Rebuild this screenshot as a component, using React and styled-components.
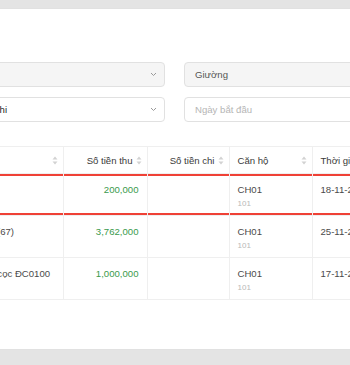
import React from 'react'
import styled, { createGlobalStyle } from 'styled-components'

const GlobalStyle = createGlobalStyle`
    html, body {
        margin: 0;
        padding: 0;
        background: #e4e4e4;
        font-family: "Liberation Sans", Arial, sans-serif;
    }
`

const rows = [
    { title: 'Tiền cọc', income: '200,000', code: 'CH01', room: '101', date: '18-11-2023', active: true },
    { title: 'Tiền phí (67)', income: '3,762,000', code: 'CH01', room: '101', date: '25-11-2023' },
    { title: 'Thu tiền cọc ĐC0100', income: '1,000,000', code: 'CH01', room: '101', date: '17-11-2023' },
]

const Chevron = () => (
    <svg width="7" height="5" viewBox="0 0 7 5">
        <path d="M1 1l2.5 2.5L6 1" fill="none" stroke="#9a9a9a" strokeWidth="1" />
    </svg>
)

const Sorter = () => (
    <svg width="6" height="9" viewBox="0 0 6 9">
        <path d="M3 0.5L5.5 3.5H0.5Z" fill="#d2d2d2" />
        <path d="M3 8.5L5.5 5.5H0.5Z" fill="#d2d2d2" />
    </svg>
)

export default function App() {
    return (
        <>
            <GlobalStyle />
            <Page>
                <Panel>
                    <Shift>
                        <Filters>
                            <Field disabled>
                                <span></span>
                                <Chevron />
                            </Field>
                            <Field disabled>
                                <span>Giường</span>
                            </Field>
                            <Field>
                                <Value>Loại thu chi</Value>
                                <Chevron />
                            </Field>
                            <Field>
                                <Placeholder>Ngày bắt đầu</Placeholder>
                            </Field>
                        </Filters>

                        <Table>
                            <colgroup>
                                <col style={{ width: 111 }} />
                                <col style={{ width: 84 }} />
                                <col style={{ width: 82 }} />
                                <col style={{ width: 83 }} />
                                <col style={{ width: 120 }} />
                            </colgroup>
                            <thead>
                                <tr>
                                    <Th><HeadCell>Nội dung<Sorter /></HeadCell></Th>
                                    <Th><HeadCell right>Số tiền thu<Sorter /></HeadCell></Th>
                                    <Th><HeadCell right>Số tiền chi<Sorter /></HeadCell></Th>
                                    <Th><HeadCell>Căn hộ<Sorter /></HeadCell></Th>
                                    <Th><HeadCell>Thời gian<Sorter /></HeadCell></Th>
                                </tr>
                            </thead>
                            <tbody>
                                {rows.map((r, i) => (
                                    <tr key={i}>
                                        <Td active={r.active}>{r.title}</Td>
                                        <Td active={r.active} right><Money>{r.income}</Money></Td>
                                        <Td active={r.active} right></Td>
                                        <Td active={r.active}>
                                            <div>{r.code}</div>
                                            <Sub>{r.room}</Sub>
                                        </Td>
                                        <Td active={r.active}>{r.date}</Td>
                                    </tr>
                                ))}
                            </tbody>
                        </Table>
                    </Shift>
                </Panel>
            </Page>
        </>
    )
}

const Page = styled.div`
    width: 350px;
    height: 365px;
    padding-top: 9px;
    box-sizing: border-box;
    overflow: hidden;
`

const Panel = styled.div`
    background: #ffffff;
    height: 340px;
    padding-top: 53px;
    box-sizing: border-box;
    box-shadow: 0 0 1px rgba(0, 0, 0, 0.08);
`

const Shift = styled.div`
    margin-left: -54px;
    width: 700px;
`

const Filters = styled.div`
    display: grid;
    grid-template-columns: 219px 300px;
    column-gap: 19px;
    row-gap: 10px;
`

const Field = styled.div`
    height: 25px;
    box-sizing: border-box;
    border: 1px solid #e1e1e1;
    border-radius: 4px;
    background: ${({ disabled }) => disabled ? '#f5f5f5' : '#ffffff'};
    display: flex;
    align-items: center;
    justify-content: space-between;
    padding: 0 7px 0 10px;
    font-size: 9.6px;
    color: #555;
    svg {
        flex-shrink: 0;
    }
`

const Value = styled.span`
    color: #262626;
    font-weight: 500;
    padding-left: 1px;
`

const Placeholder = styled.span`
    color: #b5b5b5;
`

const Table = styled.table`
    margin-top: 24px;
    margin-left: 6px;
    border-collapse: collapse;
    table-layout: fixed;
    width: 480px;
    font-size: 9.6px;
`

const Th = styled.th`
    height: 26px;
    padding: 0 5px 0 8px;
    border-top: 1px solid #efefef;
    border-bottom: 1px solid #efefef;
    border-right: 1px solid #efefef;
    font-weight: normal;
    color: #3a3a3a;
    text-align: left;
    white-space: nowrap;
    overflow: hidden;
`

const HeadCell = styled.div`
    display: flex;
    align-items: center;
    justify-content: ${({ right }) => right ? 'flex-end' : 'space-between'};
    gap: 3px;
`

const Td = styled.td`
    vertical-align: top;
    padding: 9px 8px 4px;
    line-height: 14px;
    height: 41px;
    box-sizing: border-box;
    color: #4a4a4a;
    text-align: ${({ right }) => right ? 'right' : 'left'};
    border-right: 1px solid #efefef;
    border-bottom: 1px solid #efefef;
    white-space: nowrap;
    overflow: hidden;
    box-shadow: ${({ active }) => active ? 'inset 0 2px 0 #ef4136, inset 0 -2px 0 #ef4136' : 'none'};
`

const Money = styled.span`
    color: #3a9a4c;
`

const Sub = styled.div`
    font-size: 8px;
    color: #b8b8b8;
`
